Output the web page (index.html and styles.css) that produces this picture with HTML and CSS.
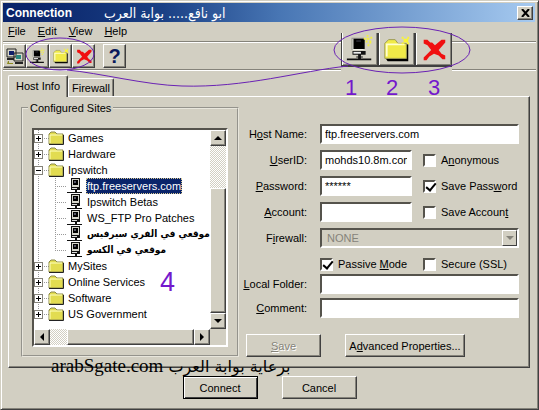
FILE: index.html
```
<!DOCTYPE html>
<html lang="en">
<head>
<meta charset="UTF-8">
<title>Connection</title>
<link rel="stylesheet" href="styles.css">
</head>
<body>
<!-- shared icons -->
<svg class="icon-defs" aria-hidden="true">
    <symbol id="icon-pc" viewBox="0 0 16 16">
        <path d="M4 0h9v10H4z" fill="#111"/>
        <path d="M5 1h7v8H5z" fill="#d6d6cc"/>
        <path d="M6 2h5v5H6z" fill="#000"/>
        <path d="M7 3h2v2H7z" fill="#556"/>
        <path d="M4 10h9v2H4zM8 12h2v2H8zM0 14h15v1H0z" fill="#111"/>
        <path d="M5 10h5v1H5z" fill="#ddd"/>
    </symbol>
    <symbol id="icon-newpc" viewBox="0 0 32 32">
        <path d="M7 4h13v13H7z" fill="#8c8c84"/>
        <path d="M8 5h12v12H8z" fill="#f8f8f0"/>
        <path d="M9 5h12v11H9z" fill="#000"/>
        <path d="M12 7h5v1h-5z" fill="#445"/>
        <path d="M8 18h14v4H8zM14 22h3v4h-3zM2 26h26v2H2zM12 24h7v1h-7z" fill="#111"/>
        <path d="M9 19h8v2H9z" fill="#eee"/>
        <path d="M20 4h2v2h-2zM23 1h2v2h-2zM27 3h2v2h-2zM22 7h2v2h-2zM26 7h2v3h-2zM24 11h2v2h-2zM23 4h3v2h-3z" fill="#f4f040"/>
    </symbol>
    <symbol id="icon-folder" viewBox="0 0 16 14">
        <path d="M1 3l2-2h4l2 2h6v10H1z" fill="#e2dc50" stroke="#8c8a4c"/>
        <path d="M2 12V4h12" stroke="#ffffc0" fill="none"/>
        <path d="M1 13.5h14.500V4" stroke="#222" fill="none"/>
    </symbol>
    <symbol id="icon-newfolder" viewBox="0 0 32 32">
        <path d="M4 26h22V11h2v18H6z" fill="#000"/>
        <path d="M3 26V10l4-4h7l3 4h9v16z" fill="#f0ea48" stroke="#9a9850"/>
        <path d="M5 24V11h19" stroke="#ffffd0" stroke-width="2" fill="none"/>
        <path d="M21 3h2v2h-2zM27 3h2v2h-2zM23 5h5v4h-5zM21 9h2v2h-2zM27 9h2v2h-2z" fill="#fbf630"/>
    </symbol>
    <symbol id="icon-delete" viewBox="0 0 32 32">
        <path d="M5 6h4l3 3h2l3 3 7-6h4v3l-7 8 3 4 4 2v4h-3l-4-4-5-2-5 3-3 4H5v-3l3-3 5-5-4-5-4-2z" fill="#f01010"/>
    </symbol>
    <symbol id="icon-up" viewBox="0 0 8 8"><path d="M4 2l4 4H0z"/></symbol>
    <symbol id="icon-down" viewBox="0 0 8 8"><path d="M0 2h8L4 6z"/></symbol>
    <symbol id="icon-left" viewBox="0 0 8 8"><path d="M6 0v8L2 4z"/></symbol>
    <symbol id="icon-right" viewBox="0 0 8 8"><path d="M2 0l4 4-4 4z"/></symbol>
</svg>

<div class="window">
    <div class="titlebar">
        <span class="title">Connection</span>
        <span class="title-ar" lang="ar" dir="rtl">ابو نافع..... بوابة العرب</span>
        <button class="close" type="button" aria-label="Close"><svg width="9" height="8" viewBox="0 0 9 8"><path d="M1 0l7 8M8 0L1 8" stroke="#000" stroke-width="2"/></svg></button>
    </div>
    <nav class="menubar">
        <a href="#"><u>F</u>ile</a>
        <a href="#"><u>E</u>dit</a>
        <a href="#"><u>V</u>iew</a>
        <a href="#"><u>H</u>elp</a>
    </nav>
    <div class="toolbar">
        <button type="button" class="tool" aria-label="Connect sites">
            <svg width="18" height="16" viewBox="0 0 18 16">
                <path d="M1 1h9v8H1zM8 5h9v8H8z" fill="#d8d8c8" stroke="#222"/>
                <path d="M3 3h5v4H3z" fill="#10206a"/><path d="M10 7h5v4h-5z" fill="#2a8a80"/>
                <path d="M1 10h7v2H1zM9 14h8v2H9z" fill="#222"/>
                <path d="M2 13h1v2h4v1H1z" fill="#8c8a20"/>
            </svg>
        </button>
        <button type="button" class="tool" aria-label="New site"><svg width="17" height="17"><use href="#icon-newpc"/></svg></button>
        <button type="button" class="tool" aria-label="New folder"><svg width="18" height="18"><use href="#icon-newfolder"/></svg></button>
        <button type="button" class="tool" aria-label="Delete"><svg width="20" height="20"><use href="#icon-delete"/></svg></button>
        <button type="button" class="tool help" aria-label="Help">?</button>
    </div>

    <div class="tabs">
        <button type="button" class="tab active">Host Info</button>
        <button type="button" class="tab">Firewall</button>
    </div>
    <div class="panel">
        <fieldset class="sites">
            <legend>Configured Sites</legend>
            <div class="tree">
                <ul class="list">
                    <li class="row"><span class="box plus"></span><svg class="folder"><use href="#icon-folder"/></svg><span class="name">Games</span></li>
                    <li class="row"><span class="box plus"></span><svg class="folder"><use href="#icon-folder"/></svg><span class="name">Hardware</span></li>
                    <li class="row"><span class="box"></span><svg class="folder"><use href="#icon-folder"/></svg><span class="name">Ipswitch</span></li>
                    <li class="row child"><svg class="pc"><use href="#icon-pc"/></svg><span class="name selected">ftp.freeservers.com</span></li>
                    <li class="row child"><svg class="pc"><use href="#icon-pc"/></svg><span class="name">Ipswitch Betas</span></li>
                    <li class="row child"><svg class="pc"><use href="#icon-pc"/></svg><span class="name">WS_FTP Pro Patches</span></li>
                    <li class="row child"><svg class="pc"><use href="#icon-pc"/></svg><span class="name ar" lang="ar" dir="rtl">موقعي في الفري سيرفيس</span></li>
                    <li class="row child last"><svg class="pc"><use href="#icon-pc"/></svg><span class="name ar" lang="ar" dir="rtl">موقعي في الكسو</span></li>
                    <li class="row"><span class="box plus"></span><svg class="folder"><use href="#icon-folder"/></svg><span class="name">MySites</span></li>
                    <li class="row"><span class="box plus"></span><svg class="folder"><use href="#icon-folder"/></svg><span class="name">Online Services</span></li>
                    <li class="row"><span class="box plus"></span><svg class="folder"><use href="#icon-folder"/></svg><span class="name">Software</span></li>
                    <li class="row"><span class="box plus"></span><svg class="folder"><use href="#icon-folder"/></svg><span class="name">US Government</span></li>
                </ul>
                <div class="scroll vertical">
                    <button type="button" class="arrow" aria-label="Scroll up"><svg width="8" height="8"><use href="#icon-up"/></svg></button>
                    <div class="thumb"></div>
                    <button type="button" class="arrow" aria-label="Scroll down"><svg width="8" height="8"><use href="#icon-down"/></svg></button>
                </div>
                <div class="scroll horizontal">
                    <button type="button" class="arrow" aria-label="Scroll left"><svg width="8" height="8"><use href="#icon-left"/></svg></button>
                    <div class="thumb"></div>
                    <button type="button" class="arrow" aria-label="Scroll right"><svg width="8" height="8"><use href="#icon-right"/></svg></button>
                </div>
                <div class="corner"></div>
            </div>
        </fieldset>

        <form class="host">
            <div class="fields">
                <label class="caption" for="hostname">H<u>o</u>st Name:</label>
                <input class="text wide" type="text" id="hostname" value="ftp.freeservers.com">

                <label class="caption" for="userid"><u>U</u>serID:</label>
                <input class="text" type="text" id="userid" value="mohds10.8m.com">
                <label class="check"><input type="checkbox"><span>A<u>n</u>onymous</span></label>

                <label class="caption" for="password"><u>P</u>assword:</label>
                <input class="text" type="text" id="password" value="******">
                <label class="check"><input type="checkbox" checked><span>Save Pass<u>w</u>ord</span></label>

                <label class="caption" for="account"><u>A</u>ccount:</label>
                <input class="text" type="text" id="account">
                <label class="check"><input type="checkbox"><span>Save Accoun<u>t</u></span></label>

                <label class="caption" for="firewall">F<u>i</u>rewall:</label>
                <div class="combo wide">
                    <select id="firewall" disabled><option>NONE</option></select>
                    <span class="drop"><svg width="8" height="8"><use href="#icon-down"/></svg></span>
                </div>

                <label class="check passive"><input type="checkbox" checked><span>Passive <u>M</u>ode</span></label>
                <label class="check"><input type="checkbox"><span>Secure (SSL)</span></label>
            </div>
            <div class="fields tight">
                <label class="caption" for="folder"><u>L</u>ocal Folder:</label>
                <input class="text wide" type="text" id="folder">
                <label class="caption" for="comment"><u>C</u>omment:</label>
                <input class="text wide" type="text" id="comment">
            </div>
            <div class="actions">
                <button type="button" class="btn" disabled><u>S</u>ave</button>
                <button type="button" class="btn advanced">A<u>d</u>vanced Properties...</button>
            </div>
        </form>
    </div>

    <div class="footer">
        <button type="button" class="btn default">Connect</button>
        <button type="button" class="btn">Cancel</button>
    </div>

    <!-- tutorial marks drawn over the dialog -->
    <div class="callout">
        <button type="button" class="tool" aria-label="New site"><svg width="30" height="30"><use href="#icon-newpc"/></svg></button>
        <button type="button" class="tool" aria-label="New folder"><svg width="30" height="30"><use href="#icon-newfolder"/></svg></button>
        <button type="button" class="tool" aria-label="Delete"><svg width="30" height="30"><use href="#icon-delete"/></svg></button>
    </div>
    <svg class="marks" width="539" height="410" viewBox="0 0 539 410">
        <g fill="none" stroke="#6a22b4">
            <ellipse cx="60" cy="54" rx="34" ry="16"/>
            <ellipse cx="402" cy="50" rx="68" ry="23"/>
            <path d="M67 70C100 73 145 85 182 86C245 88 300 71 348 66"/>
        </g>
        <g class="digits">
            <text x="345" y="95">1</text>
            <text x="386" y="95">2</text>
            <text x="428" y="95">3</text>
            <text class="big" x="160" y="291">4</text>
        </g>
    </svg>
    <div class="sponsor" lang="ar" dir="rtl">برعاية بوابة العرب <span>arabSgate.com</span></div>
</div>
</body>
</html>
```
FILE: styles.css
```
* {
    box-sizing: border-box;
}
body {
    margin: 0;
    background: #d2cfc2;
    color: #000;
    font: 11px/14px "Liberation Sans", "DejaVu Sans", sans-serif;
}
button, input, select {
    font: inherit;
    color: inherit;
    border-radius: 0;
    margin: 0;
}
button {
    padding: 0;
    display: flex;
    align-items: center;
    justify-content: center;
    background: #d2cfc2;
    border: 1px solid;
    border-color: #fff #404040 #404040 #fff;
    box-shadow: inset -1px -1px #85837a;
    white-space: nowrap;
}
button svg {
    display: block;
}
.icon-defs {
    display: none;
}
.window {
    position: relative;
    min-height: 100vh;
    padding: 1px;
    border: 1px solid;
    border-color: #d2cfc2 #404040 #404040 #d2cfc2;
    box-shadow: inset 1px 1px #fff, inset -1px -1px #85837a;
    overflow: hidden;
}

/* title, menu, toolbar */
.titlebar {
    display: flex;
    align-items: center;
    height: 19px;
    margin: 1px 2px 0 1px;
    padding: 0 2px 0 3px;
    background: linear-gradient(90deg, #0a246a 5%, #1a4085 30%, #4876b4 52%, #a6caf0);
    color: #fff;
}
.title {
    font-size: 12px;
    font-weight: bold;
}
.title-ar {
    margin-left: 32px;
    font: 14px/18px "DejaVu Sans Condensed", "DejaVu Sans", sans-serif;
    white-space: nowrap;
}
.close {
    width: 16px;
    height: 14px;
    margin-left: auto;
}
.menubar {
    display: flex;
    gap: 12px;
    height: 19px;
    padding: 2px 6px;
}
.menubar a {
    color: #000;
    text-decoration: none;
}
.toolbar {
    display: flex;
    height: 30px;
    margin: 0 1px;
    padding: 2px 0;
    border-top: 1px solid #85837a;
    border-bottom: 1px solid #fff;
    box-shadow: inset 0 1px #fff, inset 0 -1px #85837a;
}
.tool {
    width: 23px;
    height: 24px;
}
.help {
    margin-left: 8px;
    color: #0a1a5c;
    font-size: 20px;
    font-weight: bold;
}

/* tabs */
.tabs {
    display: flex;
    align-items: flex-end;
    margin: 4px 6px 0;
}
.tab {
    height: 18px;
    padding: 0 3px;
    border-bottom: 0;
    border-radius: 2px 2px 0 0;
    box-shadow: inset -1px 0 #85837a;
}
.tab.active {
    height: 22px;
    padding: 0 7px 2px;
    margin-bottom: -1px;
    z-index: 1;
}
.panel {
    display: grid;
    grid-template-columns: 218px 1fr;
    gap: 4px;
    margin: 0 7px 0 6px;
    padding: 4px 10px 10px 12px;
    border: 1px solid;
    border-color: #fff #404040 #404040 #fff;
    box-shadow: inset -1px -1px #85837a;
}
.sites {
    min-width: 0;
    margin: 0;
    padding: 13px 9px 8px;
    border: 2px groove #e8e6dc;
}
.sites legend {
    padding: 0 2px;
    margin-left: -4px;
}

/* site tree */
.tree {
    display: grid;
    grid-template-columns: 1fr 16px;
    border: 2px solid;
    border-color: #55534c #fff #fff #55534c;
    background: #fff;
}
.list {
    list-style: none;
    margin: 0;
    padding: 0 0 7px;
    overflow: hidden;
}
.row {
    display: flex;
    align-items: center;
    height: 16px;
    white-space: nowrap;
    background: repeating-linear-gradient(#999 0 1px, #fff 1px 2px) 4px 0 / 1px 100% no-repeat;
}
.row:last-child {
    background-size: 1px 8px;
}
.box {
    flex: none;
    width: 9px;
    height: 9px;
    border: 1px solid #85837a;
    background: linear-gradient(#000, #000) center / 5px 1px no-repeat #fff;
}
.box.plus {
    background: linear-gradient(#000, #000) center / 5px 1px no-repeat,
        linear-gradient(#000, #000) center / 1px 5px no-repeat #fff;
}
.box::after {
    content: "";
    display: block;
    width: 5px;
    margin: 3px 0 0 9px;
    border-top: 1px dotted #999;
}
.folder {
    flex: none;
    width: 16px;
    height: 14px;
    margin: 0 3px 0 5px;
}
.pc {
    flex: none;
    width: 16px;
    height: 16px;
    margin-right: 3px;
}
.child {
    padding-left: 33px;
    background: repeating-linear-gradient(#999 0 1px, #fff 1px 2px) 4px 0 / 1px 100% no-repeat,
        repeating-linear-gradient(#999 0 1px, #fff 1px 2px) 21px 0 / 1px 100% no-repeat,
        repeating-linear-gradient(90deg, #999 0 1px, #fff 1px 2px) 21px 8px / 11px 1px no-repeat;
}
.child.last {
    background-size: 1px 100%, 1px 8px, 11px 1px;
}
.name {
    padding: 1px;
}
.selected {
    background: #0a246a;
    color: #fff;
    outline: 1px dotted #d8c890;
    outline-offset: -1px;
}
.ar {
    font: bold 10px/14px "DejaVu Sans Condensed", "DejaVu Sans", sans-serif;
}
.scroll {
    display: flex;
    background: repeating-conic-gradient(#d2cfc2 0 25%, #fff 0 50%) 0 0 / 2px 2px;
}
.vertical {
    flex-direction: column;
}
.arrow {
    flex: none;
    width: 16px;
    height: 16px;
}
.thumb {
    flex: 1;
    background: #d2cfc2;
    border: 1px solid;
    border-color: #fff #404040 #404040 #fff;
    box-shadow: inset -1px -1px #85837a;
}
.vertical .thumb {
    margin-top: 42px;
}
.horizontal .thumb {
    margin-left: 17px;
}
.corner {
    background: #d2cfc2;
}

/* host form */
.host {
    margin-top: 23px;
}
.fields {
    display: grid;
    grid-template-columns: 66px 92px 1fr;
    grid-auto-rows: 20px;
    gap: 6px 11px;
    align-items: center;
}
.fields.tight {
    row-gap: 4px;
}
.caption {
    padding-right: 2px;
    text-align: right;
    white-space: nowrap;
}
.wide {
    grid-column: span 2;
}
.text {
    min-width: 0;
    width: 100%;
    height: 20px;
    padding: 0 3px;
    border: 2px solid;
    border-color: #55534c #fff #fff #55534c;
    background: #fff;
}
.check {
    display: flex;
    align-items: center;
    gap: 5px;
    white-space: nowrap;
}
.passive {
    grid-column: 2;
}
.check input {
    appearance: none;
    flex: none;
    width: 13px;
    height: 13px;
    border: 2px solid;
    border-color: #55534c #fff #fff #55534c;
    background: #fff;
}
.check input:checked::after {
    content: "";
    display: block;
    width: 4px;
    height: 8px;
    margin: -1px 0 0 3px;
    border: solid #000;
    border-width: 0 2px 2px 0;
    transform: rotate(40deg);
}
.combo {
    position: relative;
}
.combo select {
    display: block;
    appearance: none;
    width: 100%;
    height: 20px;
    padding: 0 5px;
    border: 2px solid;
    border-color: #55534c #fff #fff #55534c;
    background: #d2cfc2;
    color: #85837a;
    opacity: 1;
}
.drop {
    position: absolute;
    top: 2px;
    right: 2px;
    display: flex;
    align-items: center;
    justify-content: center;
    width: 15px;
    height: 16px;
    border: 1px solid;
    border-color: #fff #404040 #404040 #fff;
    fill: #85837a;
    pointer-events: none;
}
.actions {
    display: flex;
    gap: 24px;
    margin: 16px 0 0 3px;
}
.btn {
    width: 75px;
    height: 23px;
}
.btn:disabled {
    color: #85837a;
    text-shadow: 1px 1px #fff;
}
.advanced {
    width: 120px;
}
.default {
    outline: 1px solid #000;
    outline-offset: -1px;
    border-color: #000;
    box-shadow: inset 1px 1px #fff, inset -1px -1px #404040;
}
.footer {
    display: flex;
    justify-content: center;
    gap: 24px;
    padding: 8px 0;
}

/* marks over the dialog */
.callout {
    position: absolute;
    left: 340px;
    top: 32px;
    display: flex;
    padding-bottom: 4px;
    background: #d2cfc2;
}
.callout .tool {
    width: 37px;
    height: 34px;
    border-width: 0 1px 2px;
    border-color: #404040;
    box-shadow: inset 1px 0 #fff, inset -1px -1px #85837a;
}
.marks {
    position: absolute;
    left: -1px;
    top: -1px;
    pointer-events: none;
}
.digits {
    fill: #7418cc;
    font-size: 22px;
}
.big {
    font-size: 27px;
}
.sponsor {
    position: absolute;
    left: 50px;
    top: 354px;
    font: 16px/22px "DejaVu Sans", sans-serif;
    white-space: nowrap;
}
.sponsor span {
    font: 19px/22px "Liberation Serif", serif;
}
```
